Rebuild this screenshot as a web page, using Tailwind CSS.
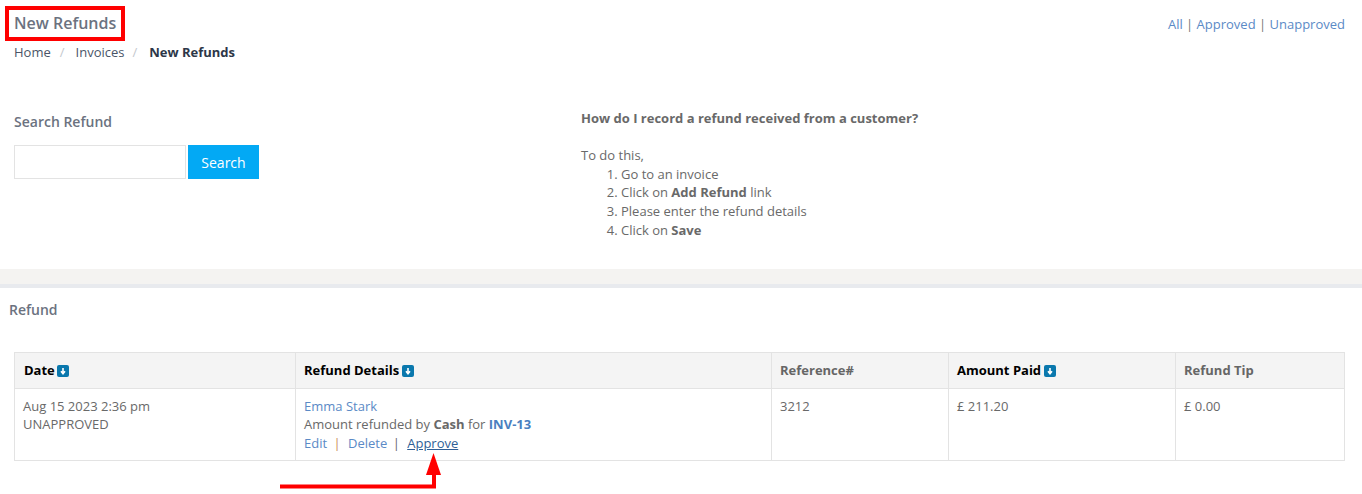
<!DOCTYPE html>
<html lang="en">
<head>
  <meta charset="UTF-8">
  <title>New Refunds</title>
  <script src="https://cdn.jsdelivr.net/npm/@tailwindcss/browser@4"></script>
</head>
<body class="relative h-[494px] overflow-hidden bg-white font-['Open_Sans',sans-serif] text-[13px] text-[#696969]">
  <!-- Page header and help -->
  <section class="h-[269px] px-[14px] pt-[6px]">
    <div class="flex justify-between">
      <div>
        <h1 class="-ml-[9px] h-[35px] w-[120px] border-[4px] border-[#ff0000] pl-[5px] text-[16px] leading-[27px] font-semibold whitespace-nowrap text-[#6b7280]">New Refunds</h1>
        <nav class="mt-[2px] flex h-[20px] items-center text-[#4a5568]">
          <span>Home</span>
          <span class="mr-[11px] ml-[9px] text-[#c4c8ce]">/</span>
          <span>Invoices</span>
          <span class="mr-[12px] ml-[8px] text-[#c4c8ce]">/</span>
          <span class="font-bold text-[#2d3748]">New Refunds</span>
        </nav>
      </div>
      <div class="mt-[9px] mr-[3px] text-[#5b8ac6]">All <span class="text-[#777]">|</span> Approved <span class="text-[#777]">|</span> Unapproved</div>
    </div>

    <div class="mt-[46px] flex">
      <div class="w-[567px] pt-[3px]">
        <h3 class="text-[14px] leading-[20px] font-semibold text-[#6b7280]">Search Refund</h3>
        <div class="mt-[13px] flex gap-[2px]">
          <input type="text" class="h-[34px] w-[172px] border border-[#e3e3e3] bg-white">
          <button class="h-[34px] w-[71px] bg-[#03a9f4] text-[14px] text-white">Search</button>
        </div>
      </div>
      <div class="pt-[0.2px] leading-[18.57px]">
        <p class="font-bold">How do I record a refund received from a customer?</p>
        <p class="mt-[18.57px]">To do this,</p>
        <ol class="list-decimal pl-[40px]">
          <li>Go to an invoice</li>
          <li>Click on <b>Add Refund</b> link</li>
          <li>Please enter the refund details</li>
          <li>Click on <b>Save</b></li>
        </ol>
      </div>
    </div>
  </section>

  <div class="h-[19px] border-b-[4px] border-[#e8eaee] bg-[#f4f3f1]"></div>

  <!-- Refund table -->
  <section class="px-[14px]">
    <h3 class="-ml-[5px] pt-[12px] text-[14px] leading-[20px] font-semibold text-[#6b7280]">Refund</h3>
    <table class="mt-[32px] w-[1331px] table-fixed border-collapse border border-[#e3e3e3]">
      <thead>
        <tr class="h-[36px] bg-[#f4f4f4] text-left text-[13px] font-bold">
          <th class="w-[281px] border border-[#e3e3e3] pl-[9px] font-bold text-black">Date <span class="ml-[-1px] inline-block align-[-2px]"><svg width="12" height="12" viewBox="0 0 12 12"><rect width="12" height="12" rx="2" fill="#0a78ad"/><path d="M6 3v5M4 6.300 6 8.800 8 6.300" fill="none" stroke="#fff" stroke-width="1.6"/></svg></span></th>
          <th class="w-[476px] border border-[#e3e3e3] pl-[8px] font-bold text-black">Refund Details <span class="ml-[-1px] inline-block align-[-2px]"><svg width="12" height="12" viewBox="0 0 12 12"><rect width="12" height="12" rx="2" fill="#0a78ad"/><path d="M6 3v5M4 6.300 6 8.800 8 6.300" fill="none" stroke="#fff" stroke-width="1.6"/></svg></span></th>
          <th class="w-[177px] border border-[#e3e3e3] pl-[8px] font-bold text-[#666]">Reference#</th>
          <th class="w-[227px] border border-[#e3e3e3] pl-[8px] font-bold text-black">Amount Paid <span class="inline-block align-[-2px]"><svg width="12" height="12" viewBox="0 0 12 12"><rect width="12" height="12" rx="2" fill="#0a78ad"/><path d="M6 3v5M4 6.300 6 8.800 8 6.300" fill="none" stroke="#fff" stroke-width="1.6"/></svg></span></th>
          <th class="border border-[#e3e3e3] pl-[8px] font-bold text-[#666]">Refund Tip</th>
        </tr>
      </thead>
      <tbody>
        <tr class="h-[72px] align-top leading-[18px]">
          <td class="border border-[#e3e3e3] pt-[8px] pl-[8px]">Aug 15 2023 2:36 pm<br>UNAPPROVED</td>
          <td class="border border-[#e3e3e3] pt-[8px] pl-[8px]">
            <div class="text-[#5b8ac6]">Emma Stark</div>
            <div>Amount refunded by <b>Cash</b> for <b class="text-[#4a7fbf]">INV-13</b></div>
            <div class="mt-[1px] text-[#5b8ac6]">Edit <span class="mr-[4px] ml-[3px] text-[#c98a5a]">|</span> Delete <span class="mr-[4px] ml-[2px] text-[#666]">|</span> <span class="text-[#2f5f96] underline">Approve</span></div>
          </td>
          <td class="border border-[#e3e3e3] pt-[8px] pl-[8px]">3212</td>
          <td class="border border-[#e3e3e3] pt-[8px] pl-[8px]">£ 211.20</td>
          <td class="border border-[#e3e3e3] pt-[8px] pl-[8px]">£ 0.00</td>
        </tr>
      </tbody>
    </table>
  </section>

  <!-- Annotation arrow -->
  <svg class="absolute top-[450px] left-[275px]" width="190" height="44" viewBox="0 0 190 44">
    <path d="M5 36.500H159V24" fill="none" stroke="#ff0000" stroke-width="4"/>
    <path d="M151 25 158.500 3 166 25z" fill="#ff0000"/>
  </svg>
</body>
</html>
